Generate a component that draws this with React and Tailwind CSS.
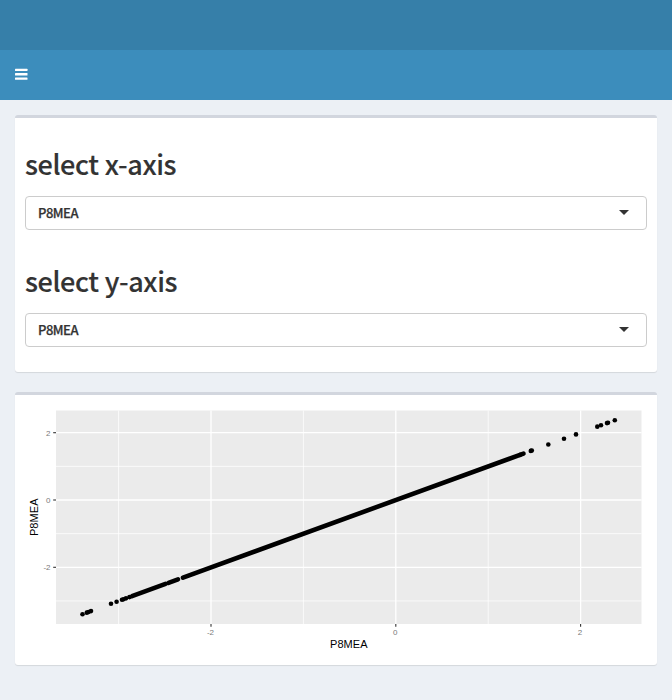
const OX = 395.8 - 25;
const OY = 500 - 405;
const toY = (px) => 614.2 - 405 - (px - 57.5) * 0.3643;

const singles = [82.5, 86.8, 88.5, 91, 111, 116.6, 122, 123.5, 126, 129.5, 530.8, 531.8, 548.3, 564, 576, 597.3, 601, 607, 608, 614.8].map((v) => v - 25);
const runs = [
  [132, 165.5],
  [168.5, 178],
  [183, 520],
  [520, 523.5],
].map(([a, b]) => [a - 25, b - 25]);

function Select({ label, value }) {
  return (
    <div>
      <h2 className="h-[33px] whitespace-nowrap text-[27px] font-medium leading-[32px] tracking-[-0.4px] [word-spacing:0.5px] [-webkit-text-stroke:0.15px_#333]">{label}</h2>
      <div className="mt-[15px] flex h-[34px] items-center justify-between rounded border border-[#ccc] bg-white pl-3 pr-[17px]">
        <span className="text-[13px] font-medium leading-5 tracking-[-0.5px] [-webkit-text-stroke:0.25px_#333]">{value}</span>
        <span className="mb-px h-0 w-0 border-x-[5px] border-t-[5px] border-x-transparent border-t-[#333]" />
      </div>
    </div>
  );
}

function Plot() {
  return (
    <svg width="622" height="250" viewBox="0 0 622 250" className="block" fontFamily='"Liberation Sans", Arial, sans-serif'>
      <rect x="31" y="5.5" width="585.5" height="213.5" fill="#ebebeb" />
      <g stroke="#fff" strokeWidth="0.75">
        {[-3, -1, 1].map((v) => (
          <line key={v} x1={OX + v * 92.4} x2={OX + v * 92.4} y1="5.5" y2="219" />
        ))}
        {[-3, -1, 1].map((v) => (
          <line key={v} x1="31" x2="616.5" y1={OY - v * 33.65} y2={OY - v * 33.65} />
        ))}
      </g>
      <g stroke="#fff" strokeWidth="1.3">
        {[-2, 0, 2].map((v) => (
          <line key={v} x1={OX + v * 92.4} x2={OX + v * 92.4} y1="5.5" y2="219" />
        ))}
        {[-2, 0, 2].map((v) => (
          <line key={v} x1="31" x2="616.5" y1={OY - v * 33.65} y2={OY - v * 33.65} />
        ))}
      </g>
      <g stroke="#333" strokeWidth="1.1">
        {[-2, 0, 2].map((v) => (
          <line key={v} x1={OX + v * 92.4} x2={OX + v * 92.4} y1="219" y2="221.8" />
        ))}
        {[-2, 0, 2].map((v) => (
          <line key={v} x1="28.2" x2="31" y1={OY - v * 33.65} y2={OY - v * 33.65} />
        ))}
      </g>
      <g stroke="#000" strokeWidth="4.6" strokeLinecap="round">
        {runs.map(([a, b]) => (
          <line key={a} x1={a} y1={toY(a)} x2={b} y2={toY(b)} />
        ))}
      </g>
      {singles.map((x) => (
        <circle key={x} cx={x} cy={toY(x)} r="2.3" />
      ))}
      <g fontSize="8" fill="#7a7a7a">
        {[-2, 0, 2].map((v) => (
          <text key={v} x={OX + v * 92.4 - 0.5} y="230" textAnchor="middle">{v}</text>
        ))}
        {[-2, 0, 2].map((v) => (
          <text key={v} x="25.5" y={OY - v * 33.65 + 3} textAnchor="end">{v}</text>
        ))}
      </g>
      <g fontSize="11" fill="#000">
        <text x="305" y="243" textLength="37.5">P8MEA</text>
        <text transform="translate(13 131) rotate(-90)" textLength="37.5">P8MEA</text>
      </g>
    </svg>
  );
}

const card = "rounded-[3px] border-t-[3px] border-[#d2d6de] bg-white px-2.5 shadow-[0_1px_1px_rgba(0,0,0,0.1)]";

export default function App() {
  return (
    <div className={'h-[700px] bg-[#ecf0f5] text-[#333] font-["Noto_Sans_CJK_SC",sans-serif]'}>
      <header>
        <div className="h-[50px] bg-[#367fa9]" />
        <nav className="flex h-[50px] items-center bg-[#3c8dbc] pb-[2px] pl-[15px]">
          <button aria-label="Toggle navigation">
            <svg width="13" height="12" viewBox="0 0 13 12" fill="#fff" className="block">
              <rect y="0.7" width="12.5" height="2.3" rx="0.5" />
              <rect y="5" width="12.5" height="2.4" rx="0.5" />
              <rect y="9.5" width="12.5" height="2.3" rx="0.5" />
            </svg>
          </button>
        </nav>
      </header>
      <main className="flex flex-col gap-5 p-[15px]">
        <section className={`${card} flex h-[257px] flex-col gap-[35px] pt-[30px]`}>
          <Select label="select x-axis" value="P8MEA" />
          <Select label="select y-axis" value="P8MEA" />
        </section>
        <section className={`${card} h-[273px] pt-2.5`}>
          <Plot />
        </section>
      </main>
    </div>
  );
}
